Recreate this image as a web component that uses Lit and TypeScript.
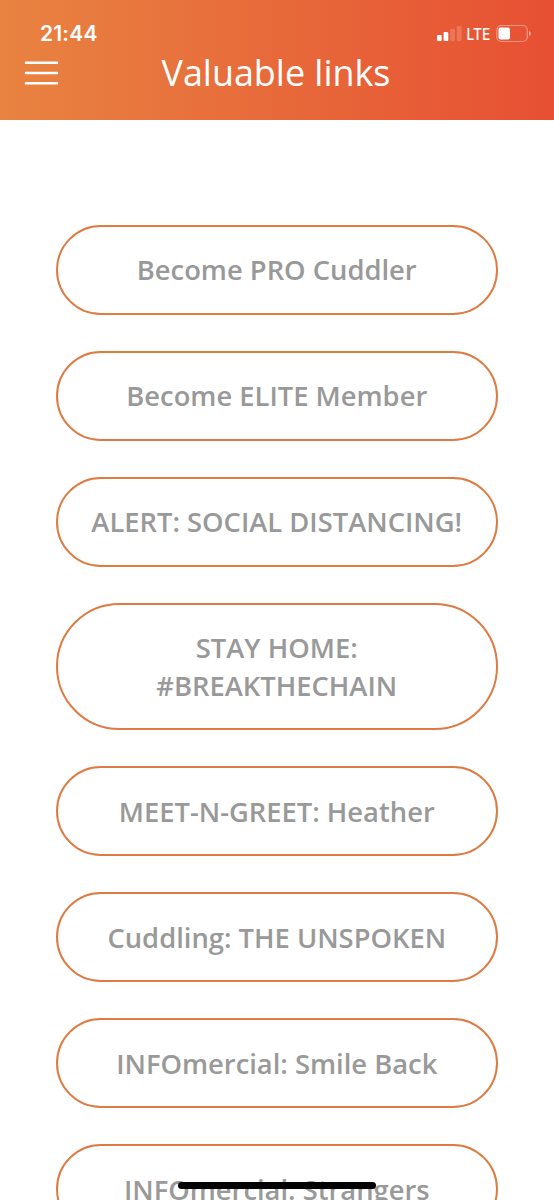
import { LitElement, html, css, svg } from "lit";
import { customElement, property } from "lit/decorators.js";

@customElement("link-pill")
class LinkPill extends LitElement {
  @property() label = "";

  static styles = css`
    :host {
      display: block;
    }
    .pill {
      display: block;
      width: 100%;
      box-sizing: border-box;
      margin: 0;
      padding: 24.6px 20px 23.9px;
      border: 2px solid #dd7b43;
      border-radius: 64px;
      background: #fff;
      color: #999;
      font: 600 27.35px/37.5px "Open Sans", sans-serif;
      text-align: center;
      white-space: pre;
    }
  `;

  render() {
    return html`<button class="pill">${this.label}</button>`;
  }
}

@customElement("app-root")
class AppRoot extends LitElement {
  static styles = css`
    :host {
      display: block;
      position: relative;
      height: 1200px;
      overflow: hidden;
      background: #fff;
      font-family: "Open Sans", sans-serif;
    }
    header {
      box-sizing: border-box;
      height: 120px;
      padding-top: 19px;
      background: linear-gradient(90deg, #e88341 0%, #e75033 100%);
      color: #fff;
    }
    .status {
      display: flex;
      justify-content: space-between;
      align-items: center;
      height: 29px;
      padding: 0 22px 0 40px;
      font-family: Inter, sans-serif;
    }
    .time {
      font-size: 21px;
      font-weight: 600;
      letter-spacing: 0.2px;
    }
    .indicators {
      display: block;
    }
    .bar {
      display: grid;
      grid-template-columns: 60px 1fr 62px;
      align-items: center;
      height: 50px;
    }
    .menu {
      padding: 0;
      border: 0;
      background: none;
      display: flex;
      margin-left: 24px;
    }
    h1 {
      margin: 0;
      text-align: center;
      font-size: 35.9px;
      font-weight: 400;
      line-height: 50px;
    }
    .links {
      display: flex;
      flex-direction: column;
      gap: 36px;
      padding: 104.8px 56px 0 55.5px;
    }
    .home {
      position: absolute;
      left: 178px;
      bottom: 11px;
      width: 198px;
      height: 7px;
      border-radius: 4px;
      background: #000;
    }
  `;

  private links = [
    "Become PRO Cuddler",
    "Become ELITE Member",
    "ALERT: SOCIAL DISTANCING!",
    "STAY HOME:\n#BREAKTHECHAIN",
    "MEET-N-GREET: Heather",
    "Cuddling: THE UNSPOKEN",
    "INFOmercial: Smile Back",
    "INFOmercial: Strangers",
  ];

  private bars = [
    { x: 0, h: 6, o: 1 },
    { x: 6.6, h: 9, o: 1 },
    { x: 13.2, h: 12, o: 0.18 },
    { x: 19.8, h: 15, o: 0.18 },
  ];

  render() {
    return html`
      <header>
        <div class="status">
          <span class="time">21:44</span>
          <svg class="indicators" width="95" height="20" viewBox="0 0 95 20" fill="#fff">
            ${this.bars.map(
              (b) => svg`<rect x=${b.x} y=${17 - b.h} width="4.7" height=${b.h} rx="1" fill-opacity=${b.o}></rect>`
            )}
            <text x="29.5" y="15.9" font-family="Inter, sans-serif" font-size="16.5" font-weight="500" textLength="24" lengthAdjust="spacingAndGlyphs">LTE</text>
            <rect x="59.8" y="1.5" width="30.5" height="16" rx="4.5" fill="none" stroke="#fff" stroke-opacity=".4" stroke-width="1.2"></rect>
            <rect x="61.5" y="3.5" width="11.5" height="12" rx="2"></rect>
            <path d="M92 7c2.5.8 2.5 4.2 0 5z" fill-opacity=".5"></path>
          </svg>
        </div>
        <div class="bar">
          <button class="menu" aria-label="Menu">
            <svg width="35" height="26" viewBox="0 0 35 26" stroke="#fff" stroke-width="2.5" stroke-linecap="round">
              <path d="M2 2.8h31M2 13h31M2 23.3h31"></path>
            </svg>
          </button>
          <h1>Valuable links</h1>
        </div>
      </header>
      <nav class="links">
        ${this.links.map((l) => html`<link-pill .label=${l}></link-pill>`)}
      </nav>
      <div class="home"></div>
    `;
  }
}
